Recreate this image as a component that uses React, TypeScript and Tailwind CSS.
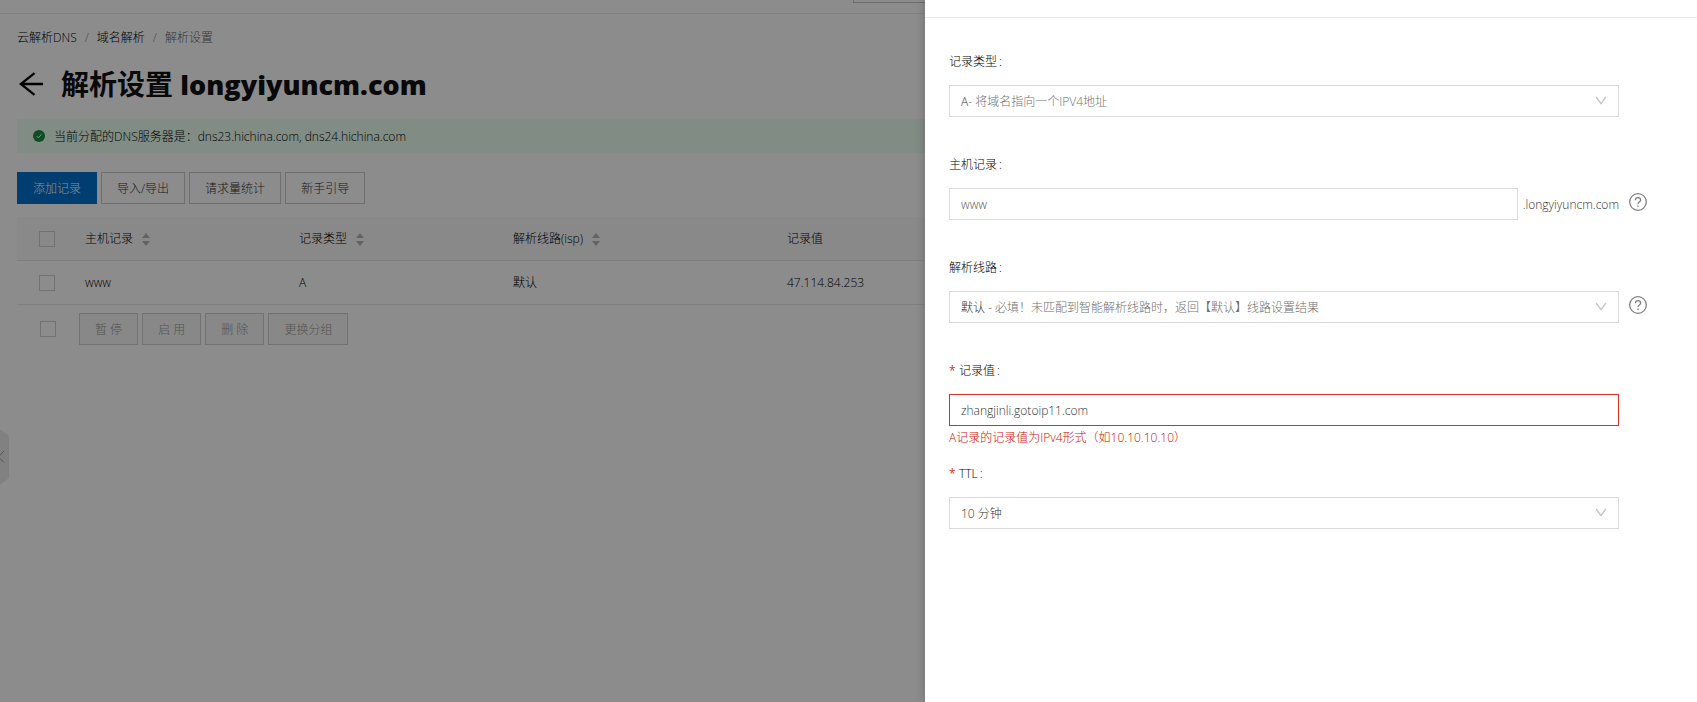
import { FC, ReactNode, useState } from 'react'

interface IOption {
    name: string;
    hint?: string;
}

const BackArrow:FC = () => (
    <svg width="24" height="24" viewBox="0 0 24 24" fill="none" stroke="#000" strokeWidth="2.3">
        <path d="M1.5 12h22.5M15.5 1.2 1.8 12 15.5 22.8" />
    </svg>
)

const SuccessIcon:FC = () => (
    <svg width="12" height="12" viewBox="0 0 12 12">
        <circle cx="6" cy="6" r="6" fill="#1e8e3e" />
        <path d="M3.6 6 5.4 7.8 8.4 4.4" fill="none" stroke="#fff" strokeWidth="1" />
    </svg>
)

const QuestionIcon:FC = () => (
    <svg width="18" height="18" viewBox="0 0 18 18" fill="none" stroke="#808080" strokeWidth="1.3">
        <circle cx="9" cy="9" r="8.3" />
        <path d="M6.4 7.2C6.4 5.7 7.5 4.7 9 4.7s2.6 1 2.6 2.4c0 1.1-.7 1.7-1.5 2.2-.8.5-1.1.8-1.1 1.9" />
        <path d="M9 12.4v1.5" />
    </svg>
)

const Sorter:FC = () => (
    <svg width="8" height="13" viewBox="0 0 8 13" fill="#b5b5b5">
        <path d="M4 0 8 5H0zM4 13 0 8h8z" />
    </svg>
)

const ToolButton:FC<{children: ReactNode, primary?: boolean}> = ({ children, primary }) => (
    <button className={primary
        ? 'h-8 px-4 pt-0.5 bg-[#0070cc] text-white'
        : 'h-8 px-[15px] pt-px border border-[#c8c8c8] text-[#333]'}
    >
        {children}
    </button>
)

const GroupButton:FC<{children: ReactNode}> = ({ children }) => (
    <button disabled className="h-8 px-[15px] pt-0.5 border border-[#d0d0d0] bg-[#f7f7f7] text-[#999]">{children}</button>
)

const CheckBox:FC<{label: string}> = ({ label }) => (
    <input type="checkbox" aria-label={label} className="block appearance-none size-4 border border-[#cfcfcf]" />
)

const Field:FC<{id: string, label: string, required?: boolean, error?: string, help?: boolean, children: ReactNode}> = ({ id, label, required, error, help, children }) => (
    <div className="h-[103px]">
        <label htmlFor={id} className="flex items-center h-5 mb-[13px] text-black">
            {required && <span className="w-2.5 font-normal text-[#d93026]">*</span>}
            {label}
            <span className="ml-0.5">:</span>
        </label>
        <div className="flex items-center">
            <div className="flex flex-1 items-center">{children}</div>
            <div className="w-[50px] pl-2.5 pb-1">
                {help && <button type="button" aria-label="帮助" className="block"><QuestionIcon /></button>}
            </div>
        </div>
        {error && <p id={`${id}-error`} className="h-6 leading-6 text-[#d00f05]">{error}</p>}
    </div>
)

const SelectBox:FC<{id: string, option: IOption}> = ({ id, option }) => (
    <div className="relative flex-1 h-8">
        <select id={id} className="block w-full h-8 px-[11px] appearance-none border border-[#d9d9d9] bg-white text-transparent">
            <option>{option.name + (option.hint ?? '')}</option>
        </select>
        <span aria-hidden="true" className="absolute inset-y-0 left-3 flex items-center pt-0.5 whitespace-pre pointer-events-none text-[#333]">
            {option.name}
            <span className="text-[#707070]">{option.hint}</span>
        </span>
        <svg className="absolute right-3 top-[11px] pointer-events-none" width="12" height="9" viewBox="0 0 12 9" fill="none" stroke="#c4c4c4" strokeWidth="1.3">
            <path d="M1.2 1 6 7.6 10.8 1" />
        </svg>
    </div>
)

const headers = [
    { name: '主机记录', sort: true },
    { name: '记录类型', sort: true },
    { name: '解析线路(isp)', sort: true },
    { name: '记录值', sort: false },
]

const records = [['www', 'A', '默认', '47.114.84.253']]

const DnsPage:FC = () => (
    <div className="min-h-screen bg-white">
        <header className="flex h-3.5 border-b border-[#ebebeb]">
            <div className="ml-[853px] w-60 h-[3px] border border-t-0 border-[#c8c8c8]"></div>
        </header>
        <main className="pl-[17px] text-black">
            <nav className="flex gap-2 h-5 mt-3.5 items-center">
                <a href="#dns">云解析DNS</a>
                <span className="text-[#888]">/</span>
                <a href="#domains">域名解析</a>
                <span className="text-[#888]">/</span>
                <span className="text-[#666]">解析设置</span>
            </nav>
            <div className="flex items-center h-10 mt-4 pl-0.5">
                <button aria-label="返回"><BackArrow /></button>
                <h1 className="ml-[18px] pt-0.5 text-[28px] font-bold text-[#111]">
                    解析设置 <span className="font-extrabold text-[27px]">longyiyuncm.com</span>
                </h1>
            </div>
            <div className="flex items-center h-[34px] mt-[15px] pl-4 gap-[9px] bg-[#ebfff0]">
                <SuccessIcon />
                <span className="pt-px">当前分配的DNS服务器是：dns23.hichina.com, dns24.hichina.com</span>
            </div>
            <div className="flex gap-1 mt-[19px]">
                <ToolButton primary>添加记录</ToolButton>
                <ToolButton>导入/导出</ToolButton>
                <ToolButton>请求量统计</ToolButton>
                <ToolButton>新手引导</ToolButton>
            </div>
            <table className="w-full mt-[13px] table-fixed text-left">
                <colgroup>
                    <col className="w-[68px]" />
                    <col className="w-[214px]" />
                    <col className="w-[214px]" />
                    <col className="w-[274px]" />
                    <col />
                </colgroup>
                <thead>
                    <tr className="h-[43px] border-b border-[#e8e8e8] bg-[#fafafa]">
                        <th className="pl-[22px] pt-0.5"><CheckBox label="全选" /></th>
                        {headers.map(item=>
                            <th key={item.name} className="pt-0.5 font-light">
                                <div className="flex items-center gap-[9px]">
                                    {item.name}
                                    {item.sort && <Sorter />}
                                </div>
                            </th>
                        )}
                    </tr>
                </thead>
                <tbody>
                    {records.map(row=>
                        <tr key={row[0]} className="h-11 border-b border-[#e8e8e8]">
                            <td className="pl-[22px] pt-0.5"><CheckBox label={row[0]} /></td>
                            {row.map(cell=> <td key={cell} className="pt-0.5">{cell}</td>)}
                        </tr>
                    )}
                </tbody>
            </table>
            <div className="flex items-center gap-1 mt-2 pl-[23px]">
                <CheckBox label="选择全部记录" />
                <div className="flex gap-1 ml-[19px]">
                    <GroupButton>暂 停</GroupButton>
                    <GroupButton>启 用</GroupButton>
                    <GroupButton>删 除</GroupButton>
                    <GroupButton>更换分组</GroupButton>
                </div>
            </div>
        </main>
        <button aria-label="展开菜单" className="absolute left-0 top-[429px]">
            <svg width="9" height="56" viewBox="0 0 9 56" fill="none">
                <path d="M0 0 9 7v42l-9 7z" fill="#ececec" />
                <path d="M4 22-1.5 28 4 33.500" stroke="#999" />
            </svg>
        </button>
    </div>
)

const RecordDrawer:FC = () => {
    const [host, setHost] = useState<string>('www');
    const [value, setValue] = useState<string>('zhangjinli.gotoip11.com');

    return (
        <aside className="absolute inset-y-0 right-0 w-[772px] bg-white shadow-[-2px_0_8px_rgba(0,0,0,0.15)]">
            <div className="h-[18px] border-b border-[#ebebeb]"></div>
            <form className="pl-6 pr-7 pt-[34px]">
                <Field id="type" label="记录类型">
                    <SelectBox id="type" option={{ name: 'A', hint: '- 将域名指向一个IPV4地址' }} />
                </Field>
                <Field id="host" label="主机记录" help>
                    <input id="host" value={host} onChange={(e)=> setHost(e.target.value)} className="flex-1 min-w-0 h-8 px-[11px] pt-px border border-[#d9d9d9] text-[#555]" />
                    <span className="ml-[5px] pt-0.5 text-[#333]">.longyiyuncm.com</span>
                </Field>
                <Field id="line" label="解析线路" help>
                    <SelectBox id="line" option={{ name: '默认', hint: ' - 必填！未匹配到智能解析线路时，返回【默认】线路设置结果' }} />
                </Field>
                <Field id="value" label="记录值" required error="A记录的记录值为IPv4形式（如10.10.10.10）">
                    <input id="value" value={value} onChange={(e)=> setValue(e.target.value)} aria-invalid="true" aria-describedby="value-error" className="flex-1 min-w-0 h-8 px-[11px] pt-px border border-[#d93026] text-[#333]" />
                </Field>
                <Field id="ttl" label="TTL" required>
                    <SelectBox id="ttl" option={{ name: '10 分钟' }} />
                </Field>
            </form>
        </aside>
    )
}

const App:FC = () => {
    return (
        <div className="relative min-h-screen overflow-hidden text-xs font-light font-['Open_Sans','Noto_Sans_CJK_SC',sans-serif]">
            <DnsPage />
            <div className="absolute inset-0 bg-black/45"></div>
            <RecordDrawer />
        </div>
    )
}

export default App;
